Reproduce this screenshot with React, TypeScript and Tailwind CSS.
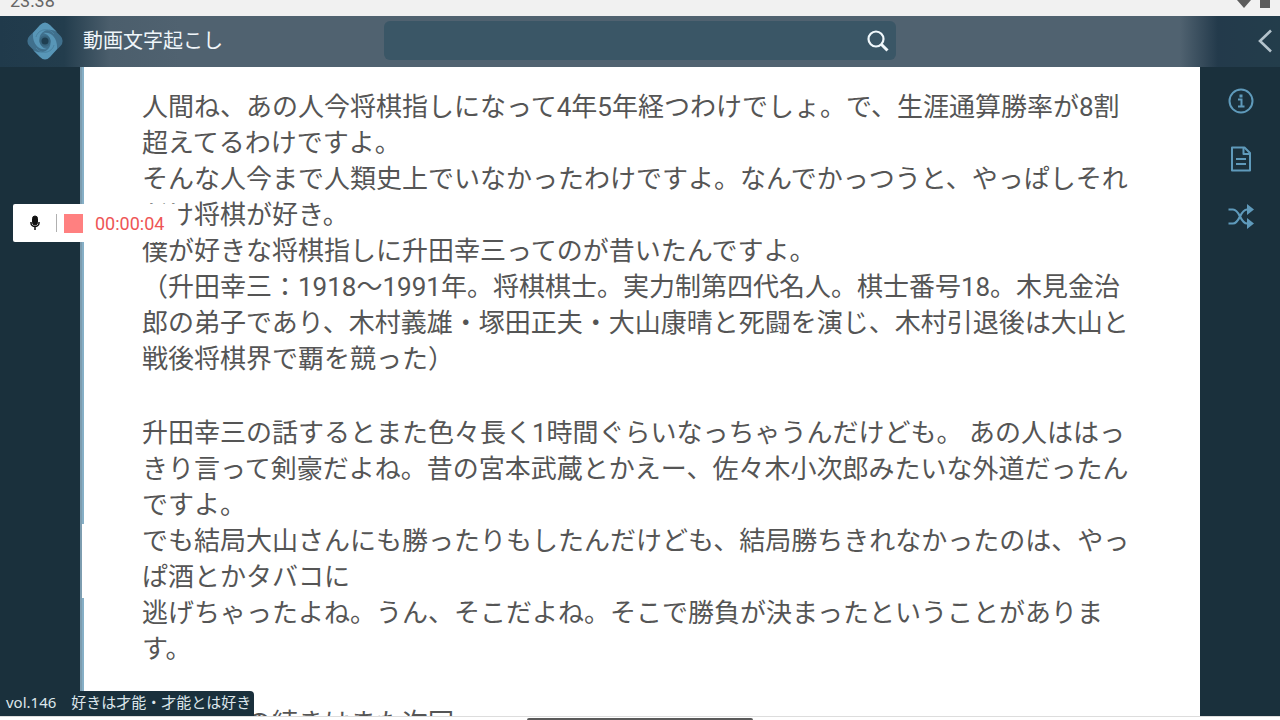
const transcript = [
  [
    "人間ね、あの人今将棋指しになって4年5年経つわけでしょ。で、生涯通算勝率が8割超えてるわけですよ。",
    "そんな人今まで人類史上でいなかったわけですよ。なんでかっつうと、やっぱしそれだけ将棋が好き。",
    "僕が好きな将棋指しに升田幸三ってのが昔いたんですよ。",
    "（升田幸三：1918〜1991年。将棋棋士。実力制第四代名人。棋士番号18。木見金治郎の弟子であり、木村義雄・塚田正夫・大山康晴と死闘を演じ、木村引退後は大山と戦後将棋界で覇を競った）",
  ],
  [
    "升田幸三の話するとまた色々長く1時間ぐらいなっちゃうんだけども。 あの人ははっきり言って剣豪だよね。昔の宮本武蔵とかえー、佐々木小次郎みたいな外道だったんですよ。",
    "でも結局大山さんにも勝ったりもしたんだけども、結局勝ちきれなかったのは、やっぱ酒とかタバコに",
    "逃げちゃったよね。うん、そこだよね。そこで勝負が決まったということがあります。",
  ],
  ["升田幸三の続きはまた次回"],
]

function StatusBar() {
  return (
    <div className="h-4 shrink-0 overflow-hidden bg-[#f1f1f1] flex justify-between items-start px-[10px] text-[#666666]">
      <span className="text-[18px] leading-[18px] -mt-2">23:38</span>
      <svg width="33" height="9" viewBox="0 0 33 9" fill="#5c5c5c" aria-hidden="true">
        <path d="M0 0h14L7 8z" />
        <path d="M23 0h10v8H23z" />
      </svg>
    </div>
  )
}

function Logo() {
  return (
    <svg width="40" height="40" viewBox="-20 -20 40 40" aria-hidden="true">
      <rect x="-14.500" y="-14.500" width="29" height="29" rx="7" fill="#40708d" transform="rotate(45)" />
      <path id="blade" d="M-12 -8L-5 -16Q0 -21 5 -16L12 -9C4 -14 -3 -10 -5 -5C-7 1 -4 7 2 8C-6 10 -13 3 -12 -8z" fill="#5896b7" />
      <use href="#blade" transform="rotate(180)" />
      <path d="M-9 -4C-7 -12 4 -14 9 -7M9 4C7 12 -4 14 -9 7" fill="none" stroke="#4a82a1" strokeWidth="1" />
      <circle r="5.500" fill="#38657f" />
      <circle r="3.500" fill="#1f3f52" />
    </svg>
  )
}

function Header() {
  return (
    <header className="h-[51px] shrink-0 pb-0.5 flex items-center bg-[linear-gradient(90deg,#203a4b_0,#233d4d_64px,#4b5e6c_110px,#506270_180px,#506270_calc(100%-100px),#233a4b_calc(100%-62px),#233d4b_100%)]">
      <a href="#" className="w-[30%] pl-[25px] flex items-center gap-[18px] text-[20px] text-[#f0f6fa]">
        <Logo />
        動画文字起こし
      </a>
      <form className="w-[40%] h-[39px] flex items-center rounded-md bg-[#3a5666] pr-[6px]">
        <input type="search" aria-label="検索" className="flex-1 min-w-0 h-full px-3 text-white outline-none" />
        <button type="button" aria-label="検索する">
          <svg width="24" height="24" viewBox="0 0 24 24" fill="none" stroke="#f0f8fc" aria-hidden="true">
            <circle cx="10" cy="10" r="7.500" strokeWidth="2.200" />
            <path d="M15.500 15.500l6 6" strokeWidth="3" />
          </svg>
        </button>
      </form>
      <button type="button" aria-label="メニュー" className="ml-auto pr-[7px]">
        <svg width="16" height="24" viewBox="0 0 16 24" fill="none" stroke="#b4c3cc" strokeWidth="2.600" aria-hidden="true">
          <path d="M14 1.500L3 12l11 10.500" />
        </svg>
      </button>
    </header>
  )
}

function SideNav() {
  return (
    <nav className="w-20 shrink-0 pt-5 pl-0.5 flex flex-col items-center gap-[30px] text-[#5f9abb]">
      <button type="button" aria-label="情報">
        <svg width="28" height="28" viewBox="0 0 28 28" fill="none" stroke="currentColor" strokeWidth="2" aria-hidden="true">
          <circle cx="14" cy="14" r="11.500" />
          <path d="M11 12.500h3.500V19M11 19.500h6.500" />
          <path d="M12.500 9h3" strokeWidth="3" />
        </svg>
      </button>
      <button type="button" aria-label="文書">
        <svg width="28" height="28" viewBox="0 0 28 28" fill="none" stroke="currentColor" strokeWidth="2" strokeLinejoin="round" aria-hidden="true">
          <path d="M5 2.500h12.500l5.500 5.500v17.500H5z" />
          <path d="M16.500 3v6H23M9 14h10M9 19h10" />
        </svg>
      </button>
      <button type="button" aria-label="シャッフル">
        <svg width="28" height="28" viewBox="0 0 28 28" fill="none" stroke="currentColor" strokeWidth="2.200" aria-hidden="true">
          <path d="M1.500 6.500H6C13 6.500 13 20.500 20 20.500h2M1.500 20.500H6C13 20.500 13 6.500 20 6.500h2" />
          <path d="M20 1l7 5.500-7 5.500zM20 15l7 5.500-7 5.500z" fill="currentColor" stroke="none" />
        </svg>
      </button>
    </nav>
  )
}

function Recorder() {
  return (
    <div className="absolute left-[13px] top-[204px] h-[38px] w-[164px] flex items-center rounded-xs bg-white">
      <button type="button" aria-label="マイク" className="w-[43px] flex justify-center">
        <svg width="12" height="16" viewBox="0 0 12 16" fill="none" stroke="#111111" aria-hidden="true">
          <rect x="3.500" y="1" width="5" height="9" rx="2.500" fill="#111111" />
          <path d="M2 7v1a4 3.500 0 0 0 8 0V7M6 11v4" strokeWidth="1.500" />
        </svg>
      </button>
      <span className="w-px h-[18px] bg-[#b0b0b0]" />
      <button type="button" aria-label="録音停止" className="ml-[7px] size-[19px] bg-[#ff8080]" />
      <span className="ml-3 text-[18px] text-[#ee5555]">00:00:04</span>
    </div>
  )
}

export default function App() {
  return (
    <div className="relative h-screen flex flex-col overflow-hidden bg-[#1a303c] font-['Roboto','Noto_Sans_CJK_JP',sans-serif]">
      <StatusBar />
      <Header />
      <div className="flex-1 min-h-0 flex">
        <div className="w-20 shrink-0" />
        <div className="w-[2px] shrink-0 bg-[#7d9db0]" />
        <div className="w-[2px] shrink-0 flex flex-col bg-[#86afc6]">
          <div className="mt-[457px] h-[74px] bg-white" />
        </div>
        <main className="flex-1 min-w-0 overflow-hidden bg-white pl-[58px] pr-[58px] pt-[22px] flex flex-col gap-[38px] text-[26px] leading-[36px] text-[#555555]">
          {transcript.map((block, i) => (
            <section key={i}>
              {block.map((line) => (
                <p key={line}>{line}</p>
              ))}
            </section>
          ))}
        </main>
        <SideNav />
      </div>
      <div className="h-1 shrink-0 border-t border-[#dddddd] bg-white flex justify-center items-end">
        <div className="w-[226px] h-[2px] rounded-t-full bg-[#5a5a5a]" />
      </div>
      <Recorder />
      <div className="absolute left-0 bottom-1 h-[25px] pl-[6px] pr-[3px] pb-0.5 flex items-center rounded-tr-sm bg-[#1a303c] text-[15px] text-[#dde6eb] font-['Noto_Sans','Noto_Sans_CJK_JP',sans-serif]">
        vol.146　好きは才能・才能とは好き
      </div>
    </div>
  )
}
